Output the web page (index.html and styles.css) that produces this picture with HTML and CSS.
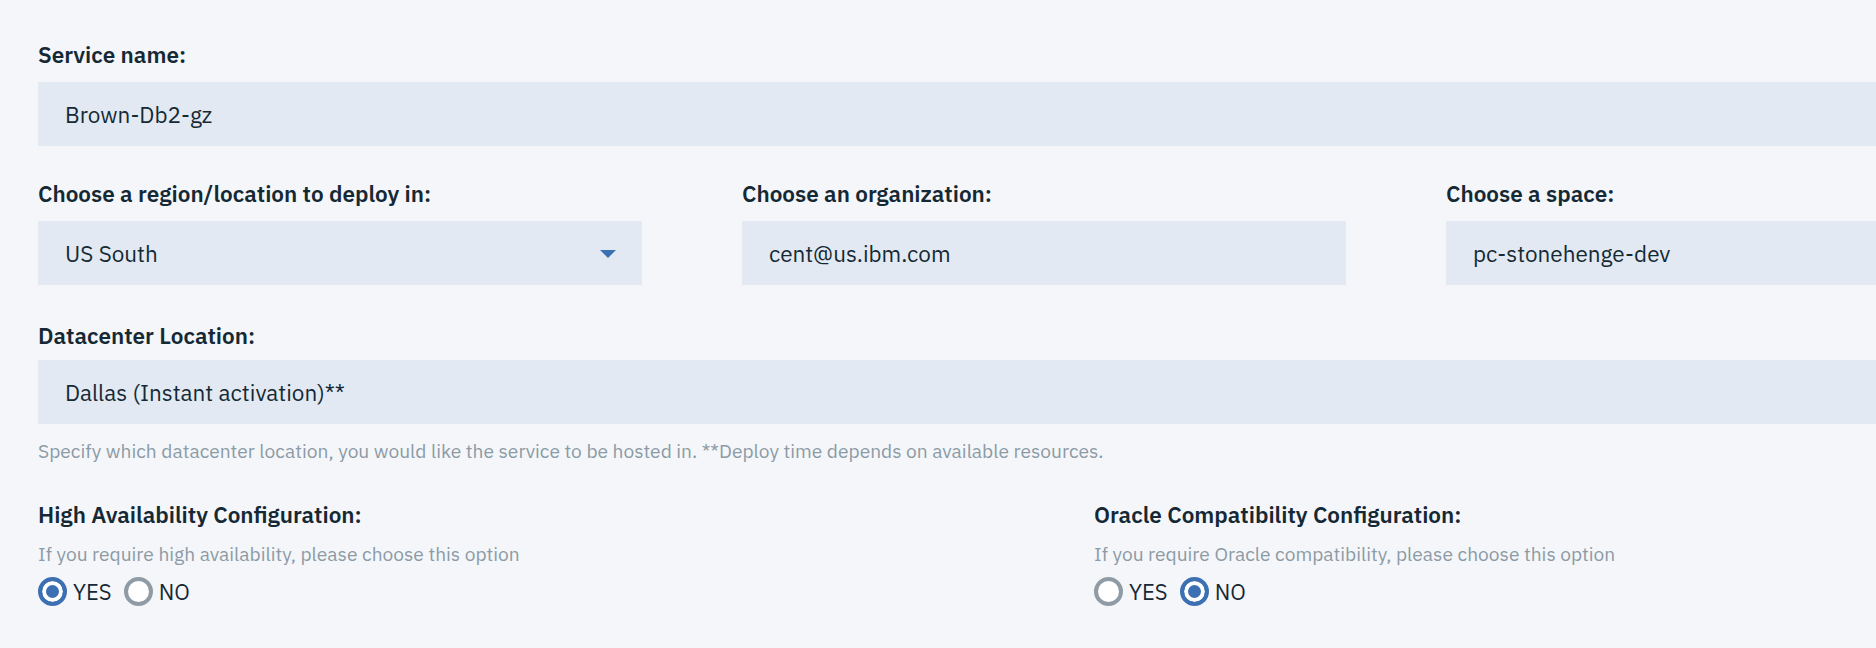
FILE: index.html
```html
<!DOCTYPE html>
<html lang="en">
<head>
<meta charset="utf-8">
<title>Create service</title>
<link rel="stylesheet" href="styles.css">
</head>
<body>
<form class="form">
  <div class="field">
    <label class="label">Service name:</label>
    <div class="input">Brown-Db2-gz</div>
  </div>

  <div class="row3">
    <div class="col">
      <label class="label">Choose a region/location to deploy in:</label>
      <div class="input select">
        <span>US South</span>
        <svg class="caret" width="16" height="8" viewBox="0 0 16 8" aria-hidden="true"><path d="M0 0h16L8 8z" fill="#3d70b2"/></svg>
      </div>
    </div>
    <div class="col">
      <label class="label">Choose an organization:</label>
      <div class="input">cent@us.ibm.com</div>
    </div>
    <div class="col">
      <label class="label">Choose a space:</label>
      <div class="input">pc-stonehenge-dev</div>
    </div>
  </div>

  <div class="field field-dc">
    <label class="label">Datacenter Location:</label>
    <div class="input">Dallas (Instant activation)**</div>
    <p class="help">Specify which datacenter location, you would like the service to be hosted in. **Deploy time depends on available resources.</p>
  </div>

  <div class="row2">
    <div class="col">
      <label class="label">High Availability Configuration:</label>
      <p class="help help-tight">If you require high availability, please choose this option</p>
      <div class="radios">
        <span class="radio"><span class="dot on"></span>YES</span>
        <span class="radio"><span class="dot"></span>NO</span>
      </div>
    </div>
    <div class="col">
      <label class="label">Oracle Compatibility Configuration:</label>
      <p class="help help-tight">If you require Oracle compatibility, please choose this option</p>
      <div class="radios">
        <span class="radio"><span class="dot"></span>YES</span>
        <span class="radio"><span class="dot on"></span>NO</span>
      </div>
    </div>
  </div>
</form>
</body>
</html>
```

FILE: styles.css
```css
html, body {
  margin: 0;
  background: #f4f6fa;
}

body {
  font-family: "IBM Plex Sans", Inter, "Open Sans", sans-serif;
  color: #152935;
  overflow: hidden;
}

.form {
  width: 2012px;
  padding: 42px 0 0 38px;
}

.label {
  display: block;
  font-size: 22.5px;
  line-height: 26px;
  font-weight: 600;
  margin-bottom: 14px;
}

.input {
  height: 64px;
  box-sizing: border-box;
  padding: 0 26px 0 27px;
  background: #e2e9f2;
  font-size: 22.5px;
  display: flex;
  align-items: center;
}

.select {
  justify-content: space-between;
}

.caret {
  margin-right: 0;
  margin-top: 2px;
}

.field {
  margin-bottom: 35px;
}

.row3 {
  display: grid;
  grid-template-columns: repeat(3, 604px);
  column-gap: 100px;
  margin-bottom: 38px;
}

.field-dc .label {
  margin-bottom: 11px;
}

.field-dc {
  margin-bottom: 0;
}

.help {
  margin: 15px 0 0;
  font-size: 19.2px;
  line-height: 23px;
  color: #8c9ba5;
}

.help-tight {
  margin-top: 8px;
}

.row2 {
  display: grid;
  grid-template-columns: repeat(2, 956px);
  column-gap: 100px;
  margin-top: 40px;
}

.radios {
  display: flex;
  align-items: center;
  margin-top: 12px;
  font-size: 22px;
}

.radio {
  display: flex;
  align-items: center;
  gap: 6px;
  margin-right: 12px;
}

.dot {
  width: 21px;
  height: 21px;
  border: 4px solid #8f9ca5;
  border-radius: 50%;
  background: #fff;
}

.dot.on {
  border-color: #3d70b2;
  background: #3d70b2;
  box-shadow: inset 0 0 0 4px #fff;
}
```
